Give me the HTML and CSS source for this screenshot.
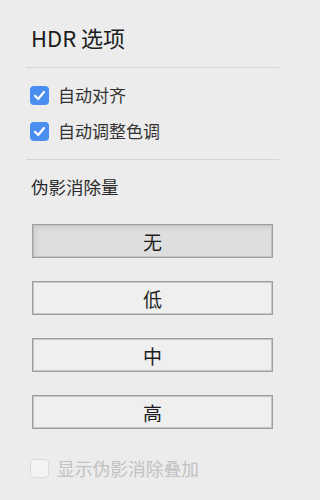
FILE: index.html
```html
<!DOCTYPE html>
<html lang="zh-CN">
<head>
<meta charset="utf-8">
<title>HDR 选项</title>
<link rel="stylesheet" href="styles.css">
</head>
<body>
<div class="panel">
  <h1 class="title">HDR 选项</h1>
  <div class="sep"></div>
  <div class="checks">
    <label class="row">
      <span class="box on"><svg viewBox="0 0 19 19" width="19" height="19"><path d="M5 9.8 L8.2 13 L14 6" fill="none" stroke="#fff" stroke-width="2.2" stroke-linecap="round" stroke-linejoin="round"/></svg></span>
      <span class="lbl">自动对齐</span>
    </label>
    <label class="row">
      <span class="box on"><svg viewBox="0 0 19 19" width="19" height="19"><path d="M5 9.8 L8.2 13 L14 6" fill="none" stroke="#fff" stroke-width="2.2" stroke-linecap="round" stroke-linejoin="round"/></svg></span>
      <span class="lbl">自动调整色调</span>
    </label>
  </div>
  <div class="sep"></div>
  <div class="section">伪影消除量</div>
  <div class="buttons">
    <div class="btn selected">无</div>
    <div class="btn">低</div>
    <div class="btn">中</div>
    <div class="btn">高</div>
  </div>
  <label class="row disabled">
    <span class="box off"></span>
    <span class="lbl">显示伪影消除叠加</span>
  </label>
</div>
</body>
</html>
```

FILE: styles.css
```css
html, body {
  margin: 0;
  padding: 0;
  background: #ececec;
  height: 100%;
}
body {
  font-family: "Noto Sans CJK SC", "Noto Sans", sans-serif;
  color: #2a2a2a;
}
.panel {
  width: 305px;
  box-sizing: border-box;
  padding: 0 26px;
}
.title {
  margin: 23px 0 16px 5px;
  font-size: 22px;
  font-weight: 400;
  line-height: 28px;
  color: #1c1c1c;
}
.sep {
  height: 1px;
  background: #d5d5d5;
}
.checks {
  padding: 9px 0 10px;
}
.row {
  display: flex;
  align-items: center;
  height: 36px;
  padding-left: 4px;
  gap: 9px;
}
.box {
  width: 19px;
  height: 19px;
  border-radius: 4px;
  box-sizing: border-box;
  flex: none;
  display: block;
}
.box svg { display: block; }
.box.on {
  background: #4b8ef2;
}
.box.off {
  background: #f4f4f4;
  border: 1px solid #dadada;
}
.lbl {
  font-size: 17px;
  line-height: 24px;
  color: #333;
}
.section {
  margin: 15px 0 0 5px;
  font-size: 17.5px;
  line-height: 24px;
  color: #2a2a2a;
}
.buttons {
  margin: 25px 6px 0 6px;
  display: flex;
  flex-direction: column;
  gap: 23px;
}
.btn {
  height: 34px;
  box-sizing: border-box;
  border: 1px solid #9e9e9e;
  box-shadow: inset 0 0 0 1px #c6c6c6;
  background: #efefef;
  display: flex;
  align-items: center;
  justify-content: center;
  font-size: 19px;
  color: #1e1e1e;
}
.btn.selected {
  background: #dedede;
  box-shadow: inset 0 0 0 1px #c2c2c2, inset 3px 3px 4px rgba(0, 0, 0, 0.08);
}
.row.disabled {
  margin-top: 21px;
  gap: 8px;
}
.row.disabled .lbl {
  font-size: 17.75px;
  color: #c2c2c2;
}
```
